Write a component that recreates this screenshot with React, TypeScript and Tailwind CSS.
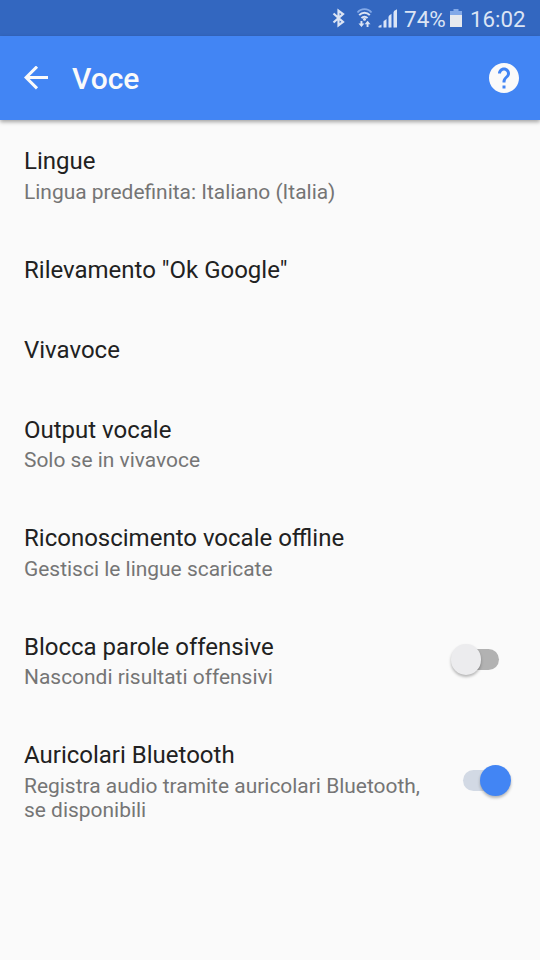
import React, { useState } from 'react';
import clsx from 'clsx';

interface SettingItem {
  id: string;
  title: string;
  summary?: string;
  toggle?: boolean;
}

const settings: SettingItem[] = [
  { id: 'languages', title: 'Lingue', summary: 'Lingua predefinita: Italiano (Italia)' },
  { id: 'hotword', title: 'Rilevamento "Ok Google"' },
  { id: 'handsfree', title: 'Vivavoce' },
  { id: 'output', title: 'Output vocale', summary: 'Solo se in vivavoce' },
  { id: 'offline', title: 'Riconoscimento vocale offline', summary: 'Gestisci le lingue scaricate' },
  { id: 'offensive', title: 'Blocca parole offensive', summary: 'Nascondi risultati offensivi', toggle: true },
  {
    id: 'bluetooth',
    title: 'Auricolari Bluetooth',
    summary: 'Registra audio tramite auricolari Bluetooth, se disponibili',
    toggle: true
  }
];

const StatusBar: React.FC = () => (
  <div className="flex h-9 items-center bg-[#3367c0] pr-[14px] text-[#dbe4f4]">
    {/* Bluetooth */}
    <svg className="ml-auto" width="14" height="20" viewBox="0 0 14 20" fill="none" stroke="currentColor" strokeWidth="2.2">
      <path d="M1.5 5.5 11 14 6.5 17.3V2.7L11 6l-9.5 8.5" />
    </svg>
    {/* Wi-Fi with the data arrows below it */}
    <svg className="ml-[10px]" width="18" height="20" viewBox="0 0 18 20" fill="none" stroke="currentColor">
      <path d="M1.5 4.5C5 .1 12 .1 15.5 4.5" strokeWidth="1.8" stroke="#83a9e8" />
      <path d="M3.2 7.2c3-3.4 7.6-3.4 10.6 0M5.5 10.1c1.6-1.9 4.4-1.9 6 0" strokeWidth="2" />
      <circle cx="8.5" cy="11.2" r="1.5" fill="currentColor" stroke="none" />
      <path d="M2.5 15.5h2V13h1.9v2.5h2L5.45 19zM8.7 16.2 11.6 12.7l2.9 3.5h-2V19h-1.9v-2.8z" fill="currentColor" stroke="none" />
    </svg>
    {/* Signal */}
    <svg className="ml-1" width="20" height="19" viewBox="0 0 20 19">
      <path d="M0 18.5v-1l2-1.5v2.5zM5 18.5v-6l1.5-1.5v7.5zM10 18.5V8l1.5-2v12.5zM15 18.5v-15l1.5-2v17z" fill="#83a9e8" />
      <path d="M1.2 18.5V17l2.3-1.5v3zM6 18.5V12l2.5-2v8.5zM11 18.5V6.8l2.5-2v13.7zM16 18.5V2l3-1.7v18.2z" fill="currentColor" />
    </svg>
    <span className="ml-[6px] w-[43px] pt-0.5 text-[22.5px] leading-9">74%</span>
    {/* Battery */}
    <svg className="ml-[3px]" width="12" height="18" viewBox="0 0 12 18">
      <path d="M0 2h3.5V0h5v2H12v5H0z" fill="#83a9e8" />
      <path d="M0 6h12v12H0z" fill="#e6e9ee" />
    </svg>
    <span className="ml-2 w-[56px] pt-0.5 text-[22.3px] leading-9">16:02</span>
  </div>
);

const AppBar: React.FC<{ title: string }> = ({ title }) => (
  <header className="relative flex h-[84px] items-center bg-[#4285f4] pr-[21px] pl-6 text-[#fafafa] shadow-[0_2px_4px_rgba(0,0,0,0.35)]">
    <button aria-label="Indietro">
      <svg width="25" height="24" viewBox="0 0 25 24" fill="none" stroke="currentColor" strokeWidth="3">
        <path d="M24 11.5H2.5M13 .6 2.1 11.5 13 22.4" />
      </svg>
    </button>
    <h1 className="ml-[23px] pt-0.5 text-[30px] leading-9 font-medium">{title}</h1>
    <button aria-label="Guida" className="ml-auto">
      <svg width="30" height="30" viewBox="2 2 20 20" fill="currentColor">
        <path d="M12 2C6.48 2 2 6.48 2 12s4.48 10 10 10 10-4.48 10-10S17.52 2 12 2zm1 17h-2v-2h2v2zm2.07-7.75-.9.92C13.45 12.9 13 13.5 13 15h-2v-.5c0-1.1.45-2.1 1.17-2.83l1.24-1.26c.37-.36.59-.86.59-1.41 0-1.1-.9-2-2-2s-2 .9-2 2H8c0-2.21 1.79-4 4-4s4 1.79 4 4c0 .88-.36 1.68-.93 2.25z" />
      </svg>
    </button>
  </header>
);

const Toggle: React.FC<{ checked: boolean; label: string; onChange: () => void }> = ({ checked, label, onChange }) => (
  <button role="switch" aria-checked={checked} aria-label={label} onClick={onChange} className="relative mr-[41px] mb-[3px] h-[31px] w-9 shrink-0">
    <span className={clsx('absolute inset-x-0 top-[5px] h-[21px] rounded-full', checked ? 'bg-[#d2d9e4]' : 'bg-[#b2b2b2]')} />
    <span
      className={clsx(
        'absolute top-[0.5px] size-[30.5px] rounded-full shadow-[0_2px_3px_rgba(0,0,0,0.28)]',
        checked ? 'left-[17px] bg-[#4285f4]' : '-left-[12.5px] bg-[#ececee]'
      )}
    />
  </button>
);

export default function App() {
  const [enabled, setEnabled] = useState<Record<string, boolean>>({ offensive: false, bluetooth: true });

  const toggleSetting = (id: string) => {
    setEnabled((prev) => ({ ...prev, [id]: !prev[id] }));
  };

  return (
    <div className="min-h-screen bg-[#fafafa] font-[Roboto,sans-serif]">
      <StatusBar />
      <AppBar title="Voce" />

      <main className="pt-px">
        {settings.map((item) => (
          <div key={item.id} className="flex items-center justify-between py-[26px] pl-6">
            <div className="w-[410px]">
              <h2 className="text-2xl leading-7 text-[#212121]">{item.title}</h2>
              {item.summary && (
                <p className="-mb-[0.5px] pt-[4.5px] text-[20.95px] leading-[24.5px] text-[#757575]">{item.summary}</p>
              )}
            </div>
            {item.toggle && (
              <Toggle checked={enabled[item.id]} label={item.title} onChange={() => toggleSetting(item.id)} />
            )}
          </div>
        ))}
      </main>
    </div>
  );
}
